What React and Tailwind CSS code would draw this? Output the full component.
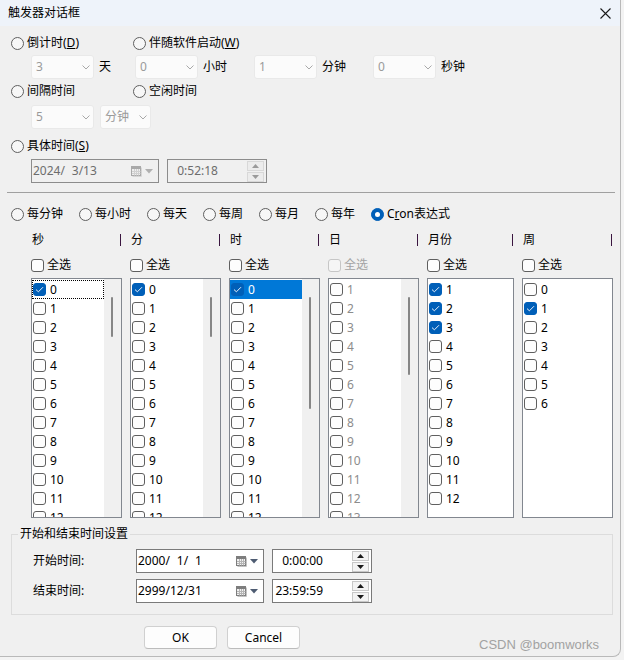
import React from "react";

const range = (a, b) => Array.from({ length: b - a + 1 }, (_, i) => a + i);

function Radio({ checked, children, className = "" }) {
  return (
    <div className={`flex items-center h-[18px] ${className}`}>
      <span
        className={`w-[13px] h-[13px] rounded-full border shrink-0 flex items-center justify-center ${
          checked ? "bg-[#005fb8] border-[#005fb8]" : "bg-[#f7f7f7] border-[#5f5f5f]"
        }`}
      >
        {checked && <span className="w-[5px] h-[5px] rounded-full bg-white" />}
      </span>
      <span className="ml-[3px] whitespace-nowrap">{children}</span>
    </div>
  );
}

function Box({ checked, faint }) {
  return (
    <span
      className={`w-[13px] h-[13px] rounded-[3px] border shrink-0 flex items-center justify-center ${
        checked ? "bg-[#005fb8] border-[#005fb8]" : faint ? "bg-[#f5f5f5] border-[#c6c6c6]" : "bg-[#fdfdfd] border-[#5f5f5f]"
      }`}
    >
      {checked && (
        <svg width="9" height="7" viewBox="0 0 9 7">
          <path d="M1 3.6 L3.4 5.8 L8 1.2" stroke="#e8f0fa" fill="none" strokeWidth="1" />
        </svg>
      )}
    </span>
  );
}

function Chevron() {
  return (
    <svg width="8" height="5" viewBox="0 0 8 5">
      <path d="M0.5 0.5 L4 4 L7.5 0.5" stroke="#a8a8a8" fill="none" strokeWidth="1" />
    </svg>
  );
}

function Combo({ w, value, className = "" }) {
  return (
    <div className={`${w} h-[24px] rounded-[3px] bg-[#fbfbfb] border border-[#e9e9e9] flex items-center justify-between pl-[4px] pr-[3px] text-[#9a9a9a] ${className}`}>
      <span>{value}</span>
      <Chevron />
    </div>
  );
}

function CalIcon({ off }) {
  const c = off ? "#a9a9a9" : "#7d7d7d";
  return (
    <svg width="11" height="11" viewBox="0 0 11 11">
      <rect x="0.5" y="0.5" width="9" height="9" fill={off ? "#eeeeee" : "#f1f1f1"} stroke={c} />
      <rect x="1" y="1" width="8" height="2" fill={c} />
      <path d="M1 5.5 H9.5 M1 7.5 H9.5 M3.5 3 V9.5 M5.5 3 V9.5 M7.5 3 V9.5" stroke={off ? "#d0d0d0" : "#b4b4b4"} strokeWidth="1" />
      <path d="M10.5 1.5 V10.5 H1.5" stroke={off ? "#d6d6d6" : "#c4c4c4"} fill="none" />
    </svg>
  );
}

function DatePicker({ value, off, className = "" }) {
  return (
    <div
      className={`w-[128px] h-[24px] border flex items-center pl-[1px] pr-[5px] ${
        off ? "border-[#8c8c8c] bg-[#f0f0f0] text-[#6d6d6d]" : "border-[#7a7a7a] bg-white text-black"
      } ${className}`}
    >
      <span className="flex-1 whitespace-pre">{value}</span>
      <CalIcon off={off} />
      <svg width="8" height="5" viewBox="0 0 8 5" className="ml-[3px]">
        <path d="M0 0 H8 L4 4.5 Z" fill={off ? "#b0b0b0" : "#4e5c72"} />
      </svg>
    </div>
  );
}

function Spin({ off }) {
  const f = off ? "#9a9a9a" : "#1a1a1a";
  return (
    <div className="flex flex-col w-[17px] gap-[1px]">
      <div className={`h-[10px] border flex items-center justify-center ${off ? "border-[#d8d8d8] bg-[#ececec]" : "border-[#c8c8c8] bg-[#f3f3f3]"}`}>
        <svg width="7" height="4" viewBox="0 0 7 4"><path d="M0 4 H7 L3.5 0 Z" fill={f} /></svg>
      </div>
      <div className={`h-[10px] border flex items-center justify-center ${off ? "border-[#d8d8d8] bg-[#ececec]" : "border-[#c8c8c8] bg-[#f3f3f3]"}`}>
        <svg width="7" height="4" viewBox="0 0 7 4"><path d="M0 0 H7 L3.5 4 Z" fill={f} /></svg>
      </div>
    </div>
  );
}

function TimePicker({ value, off, className = "" }) {
  return (
    <div
      className={`w-[100px] h-[24px] border flex items-center pr-[2px] ${
        off ? "border-[#8c8c8c] bg-[#f0f0f0] text-[#6d6d6d]" : "border-[#7a7a7a] bg-white text-black"
      } ${className}`}
    >
      <span className="w-[50px] text-right whitespace-pre">{value}</span>
      <span className="flex-1" />
      <Spin off={off} />
    </div>
  );
}

function ListBox({ w, items, checked = [], grey, scroll, thumb, focusFirst, selectFirst }) {
  return (
    <div className={`${w} h-[240px] border border-[#82878f] bg-white flex overflow-hidden`}>
      <div className="flex-1 min-w-0 pt-[1px] flex flex-col overflow-hidden">
        {items.map((n, i) => {
          const sel = selectFirst && i === 0;
          const foc = focusFirst && i === 0;
          return (
            <div
              key={n}
              className={`h-[19px] shrink-0 flex items-center pl-[1px] ${sel ? "bg-[#0078d7] text-white" : grey ? "text-[#8c8c8c]" : "text-black"} ${
                foc ? "outline-1 outline-dotted outline-black -outline-offset-1" : ""
              }`}
            >
              <Box checked={checked.includes(n)} />
              <span className="ml-[4px]">{n}</span>
            </div>
          );
        })}
      </div>
      {scroll && (
        <div className="w-[17px] shrink-0 bg-[#f0f0f0]">
          <div className={`mt-[18px] ml-[7px] w-[2px] rounded-full bg-[#868686] ${thumb}`} />
        </div>
      )}
    </div>
  );
}

function Head({ w, label }) {
  return (
    <div className={`${w} flex items-center justify-between pr-[1px]`}>
      <span className="ml-[1px]">{label}</span>
      <span className="w-[1px] h-[12px] bg-[#3b1640]" />
    </div>
  );
}

function AllBox({ w, faint }) {
  return (
    <div className={`${w} flex items-center`}>
      <Box faint={faint} />
      <span className={`ml-[3px] ${faint ? "text-[#a3a3a3]" : ""}`}>全选</span>
    </div>
  );
}

export default function App() {
  const cols = [
    { w: "w-[91px]", label: "秒" },
    { w: "w-[91px]", label: "分" },
    { w: "w-[91px]", label: "时" },
    { w: "w-[91px]", label: "日" },
    { w: "w-[87px]", label: "月份" },
    { w: "w-[91px]", label: "周" },
  ];

  return (
    <div className="w-[624px] h-[660px] bg-[#f3f3f3] overflow-hidden relative [font-family:'Noto_Sans','Noto_Sans_CJK_SC',sans-serif] text-[12px] leading-[18px] text-black">
      <div className="w-[621px] h-[657px] bg-[#f0f0f0] border-r border-b border-[#b9b9b9] rounded-br-[8px] flex flex-col overflow-hidden">
        {/* title bar */}
        <div className="h-[26px] shrink-0 bg-[#eef3fa] flex items-center justify-between pl-[8px] pr-[9px]">
          <span>触发器对话框</span>
          <svg width="11" height="11" viewBox="0 0 11 11">
            <path d="M0.5 0.5 L10.5 10.5 M10.5 0.5 L0.5 10.5" stroke="#1a1a1a" strokeWidth="1.1" />
          </svg>
        </div>

        {/* trigger options */}
        <div className="flex mt-[8px]">
          <Radio className="ml-[11px] w-[122px]">倒计时(<u>D</u>)</Radio>
          <Radio>伴随软件启动(<u>W</u>)</Radio>
        </div>
        <div className="flex items-center mt-[3px] h-[24px]">
          <Combo w="w-[63px]" value="3" className="ml-[31px]" />
          <span className="ml-[5px]">天</span>
          <Combo w="w-[63px]" value="0" className="ml-[24px]" />
          <span className="ml-[5px]">小时</span>
          <Combo w="w-[63px]" value="1" className="ml-[27px]" />
          <span className="ml-[5px]">分钟</span>
          <Combo w="w-[63px]" value="0" className="ml-[27px]" />
          <span className="ml-[5px]">秒钟</span>
        </div>
        <div className="flex mt-[3px]">
          <Radio className="ml-[11px] w-[122px]">间隔时间</Radio>
          <Radio>空闲时间</Radio>
        </div>
        <div className="flex items-center mt-[5px] h-[24px]">
          <Combo w="w-[63px]" value="5" className="ml-[31px]" />
          <Combo w="w-[51px]" value="分钟" className="ml-[6px]" />
        </div>
        <div className="flex mt-[8px]">
          <Radio className="ml-[11px]">具体时间(<u>S</u>)</Radio>
        </div>
        <div className="flex items-center mt-[4px]">
          <DatePicker value={"2024/\u20073/13"} off className="ml-[31px]" />
          <TimePicker value="0:52:18" off className="ml-[8px]" />
        </div>
        <div className="mt-[9px] ml-[7px] mr-[5px] h-[1px] bg-[#a0a0a0]" />

        {/* cron */}
        <div className="flex mt-[12px]">
          <Radio className="ml-[11px] w-[68px]">每分钟</Radio>
          <Radio className="w-[68px]">每小时</Radio>
          <Radio className="w-[56px]">每天</Radio>
          <Radio className="w-[56px]">每周</Radio>
          <Radio className="w-[56px]">每月</Radio>
          <Radio className="w-[56px]">每年</Radio>
          <Radio checked>
            C<u>r</u>on表达式
          </Radio>
        </div>
        <div className="flex h-[18px] mt-[8px] ml-[31px] gap-[8px]">
          {cols.map((c) => (
            <Head key={c.label} w={c.w} label={c.label} />
          ))}
        </div>
        <div className="flex h-[18px] mt-[7px] ml-[31px] gap-[8px]">
          <AllBox w="w-[91px]" />
          <AllBox w="w-[91px]" />
          <AllBox w="w-[91px]" />
          <AllBox w="w-[91px]" faint />
          <AllBox w="w-[87px]" />
          <AllBox w="w-[91px]" />
        </div>
        <div className="flex mt-[4px] ml-[31px] gap-[8px]">
          <ListBox w="w-[91px]" items={range(0, 12)} checked={[0]} scroll thumb="h-[40px]" focusFirst />
          <ListBox w="w-[91px]" items={range(0, 12)} checked={[0]} scroll thumb="h-[40px]" />
          <ListBox w="w-[91px]" items={range(0, 12)} checked={[0]} scroll thumb="h-[112px]" selectFirst />
          <ListBox w="w-[91px]" items={range(1, 13)} grey scroll thumb="h-[78px]" />
          <ListBox w="w-[87px]" items={range(1, 12)} checked={[1, 2, 3]} />
          <ListBox w="w-[91px]" items={range(0, 6)} checked={[1]} />
        </div>

        {/* start / end */}
        <fieldset className="mt-[8px] ml-[11px] w-[602px] border border-[#dcdcdc] pb-[11px]">
          <legend className="ml-[6px] px-[2px] leading-[16px]">开始和结束时间设置</legend>
          <div className="flex items-center mt-[7px]">
            <span className="ml-[21px] w-[103px]">开始时间:</span>
            <DatePicker value={"2000/\u20071/\u20071"} />
            <TimePicker value="0:00:00" className="ml-[8px]" />
          </div>
          <div className="flex items-center mt-[6px]">
            <span className="ml-[21px] w-[103px]">结束时间:</span>
            <DatePicker value="2999/12/31" />
            <TimePicker value="23:59:59" className="ml-[8px]" />
          </div>
        </fieldset>

        <div className="flex mt-[11px] ml-[144px] gap-[10px]">
          <button className="w-[73px] h-[23px] rounded-[4px] border border-[#d0d0d0] border-b-[#bcbcbc] bg-[#fdfdfd]">OK</button>
          <button className="w-[73px] h-[23px] rounded-[4px] border border-[#d0d0d0] border-b-[#bcbcbc] bg-[#fdfdfd]">Cancel</button>
        </div>
      </div>
      <span className="absolute left-[479px] top-[636px] text-[13px] text-[#a2a2a2] [font-family:'Liberation_Sans',sans-serif]">CSDN @boomworks</span>
    </div>
  );
}
